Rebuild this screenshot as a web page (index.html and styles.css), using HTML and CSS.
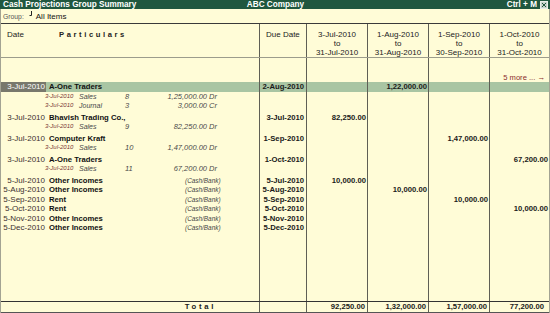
FILE: index.html
```html
<!DOCTYPE html>
<html>
<head>
<meta charset="utf-8">
<title>Cash Projections Group Summary</title>
<link rel="stylesheet" href="styles.css">
</head>
<body>
<div class="app">
  <div class="titlebar">
    <span class="title-left">Cash Projections Group Summary</span>
    <span class="title-center">ABC Company</span>
    <span class="title-right">Ctrl + M
      <svg class="close-icon" width="8" height="8" viewBox="0 0 8 8"><rect x="0.5" y="0.5" width="7" height="7" fill="#c9d3cc" stroke="#e8eee9"/><path d="M2 2 L6 6 M6 2 L2 6" stroke="#20573f" stroke-width="1"/></svg>
    </span>
  </div>
  <div class="main">
    <div class="groupbar">
      <span class="group-label">Group:</span>
      <svg class="group-marker" width="4" height="6" viewBox="0 0 4 6"><path d="M2.5 0 V4.5 M0.5 4.5 H2.5" stroke="#222" stroke-width="1" fill="none"/></svg>
      <span class="group-value">All Items</span>
    </div>
    <div class="table">
      <div class="row head">
        <div class="cell head-first"><span class="head-date">Date</span><span class="head-part">Particulars</span></div>
        <div class="cell head-due">Due Date</div>
        <div class="cell">3-Jul-2010<br>to<br>31-Jul-2010</div>
        <div class="cell">1-Aug-2010<br>to<br>31-Aug-2010</div>
        <div class="cell">1-Sep-2010<br>to<br>30-Sep-2010</div>
        <div class="cell">1-Oct-2010<br>to<br>31-Oct-2010</div>
      </div>
      <div class="body">
        <div class="row more">
          <div class="cell"></div><div class="cell"></div><div class="cell"></div><div class="cell"></div><div class="cell"></div>
          <div class="cell more-link">5 more ... &#8594;</div>
        </div>

        <div class="row r r--hl">
          <div class="cell party"><span class="p-date">3-Jul-2010</span><span class="p-name">A-One Traders</span></div>
          <div class="cell due">2-Aug-2010</div>
          <div class="cell num"></div><div class="cell num">1,22,000.00</div><div class="cell num"></div><div class="cell num"></div>
        </div>
        <div class="row r">
          <div class="cell sub"><span class="s-date">3-Jul-2010</span><span class="s-type">Sales</span><span class="s-no">8</span><span class="s-amt">1,25,000.00 Dr</span></div>
          <div class="cell"></div><div class="cell"></div><div class="cell"></div><div class="cell"></div><div class="cell"></div>
        </div>
        <div class="row r r--end">
          <div class="cell sub"><span class="s-date">3-Jul-2010</span><span class="s-type">Journal</span><span class="s-no">3</span><span class="s-amt">3,000.00 Cr</span></div>
          <div class="cell"></div><div class="cell"></div><div class="cell"></div><div class="cell"></div><div class="cell"></div>
        </div>

        <div class="row r">
          <div class="cell party"><span class="p-date">3-Jul-2010</span><span class="p-name">Bhavish Trading Co.,</span></div>
          <div class="cell due">3-Jul-2010</div>
          <div class="cell num">82,250.00</div><div class="cell num"></div><div class="cell num"></div><div class="cell num"></div>
        </div>
        <div class="row r r--end">
          <div class="cell sub"><span class="s-date">3-Jul-2010</span><span class="s-type">Sales</span><span class="s-no">9</span><span class="s-amt">82,250.00 Dr</span></div>
          <div class="cell"></div><div class="cell"></div><div class="cell"></div><div class="cell"></div><div class="cell"></div>
        </div>

        <div class="row r">
          <div class="cell party"><span class="p-date">3-Jul-2010</span><span class="p-name">Computer Kraft</span></div>
          <div class="cell due">1-Sep-2010</div>
          <div class="cell num"></div><div class="cell num"></div><div class="cell num">1,47,000.00</div><div class="cell num"></div>
        </div>
        <div class="row r r--end">
          <div class="cell sub"><span class="s-date">3-Jul-2010</span><span class="s-type">Sales</span><span class="s-no">10</span><span class="s-amt">1,47,000.00 Dr</span></div>
          <div class="cell"></div><div class="cell"></div><div class="cell"></div><div class="cell"></div><div class="cell"></div>
        </div>

        <div class="row r">
          <div class="cell party"><span class="p-date">3-Jul-2010</span><span class="p-name">A-One Traders</span></div>
          <div class="cell due">1-Oct-2010</div>
          <div class="cell num"></div><div class="cell num"></div><div class="cell num"></div><div class="cell num">67,200.00</div>
        </div>
        <div class="row r r--end">
          <div class="cell sub"><span class="s-date">3-Jul-2010</span><span class="s-type">Sales</span><span class="s-no">11</span><span class="s-amt">67,200.00 Dr</span></div>
          <div class="cell"></div><div class="cell"></div><div class="cell"></div><div class="cell"></div><div class="cell"></div>
        </div>

        <div class="row r">
          <div class="cell party"><span class="p-date">5-Jul-2010</span><span class="p-name p-name--fixed">Other Incomes</span><span class="p-cash">(Cash/Bank)</span></div>
          <div class="cell due">5-Jul-2010</div>
          <div class="cell num">10,000.00</div><div class="cell num"></div><div class="cell num"></div><div class="cell num"></div>
        </div>
        <div class="row r">
          <div class="cell party"><span class="p-date">5-Aug-2010</span><span class="p-name p-name--fixed">Other Incomes</span><span class="p-cash">(Cash/Bank)</span></div>
          <div class="cell due">5-Aug-2010</div>
          <div class="cell num"></div><div class="cell num">10,000.00</div><div class="cell num"></div><div class="cell num"></div>
        </div>
        <div class="row r">
          <div class="cell party"><span class="p-date">5-Sep-2010</span><span class="p-name p-name--fixed">Rent</span><span class="p-cash">(Cash/Bank)</span></div>
          <div class="cell due">5-Sep-2010</div>
          <div class="cell num"></div><div class="cell num"></div><div class="cell num">10,000.00</div><div class="cell num"></div>
        </div>
        <div class="row r">
          <div class="cell party"><span class="p-date">5-Oct-2010</span><span class="p-name p-name--fixed">Rent</span><span class="p-cash">(Cash/Bank)</span></div>
          <div class="cell due">5-Oct-2010</div>
          <div class="cell num"></div><div class="cell num"></div><div class="cell num"></div><div class="cell num">10,000.00</div>
        </div>
        <div class="row r">
          <div class="cell party"><span class="p-date">5-Nov-2010</span><span class="p-name p-name--fixed">Other Incomes</span><span class="p-cash">(Cash/Bank)</span></div>
          <div class="cell due">5-Nov-2010</div>
          <div class="cell num"></div><div class="cell num"></div><div class="cell num"></div><div class="cell num"></div>
        </div>
        <div class="row r">
          <div class="cell party"><span class="p-date">5-Dec-2010</span><span class="p-name p-name--fixed">Other Incomes</span><span class="p-cash">(Cash/Bank)</span></div>
          <div class="cell due">5-Dec-2010</div>
          <div class="cell num"></div><div class="cell num"></div><div class="cell num"></div><div class="cell num"></div>
        </div>

        <div class="row filler">
          <div class="cell"></div><div class="cell"></div><div class="cell"></div><div class="cell"></div><div class="cell"></div><div class="cell"></div>
        </div>
      </div>
      <div class="row total">
        <div class="cell total-label">Total</div>
        <div class="cell"></div>
        <div class="cell t-num">92,250.00</div>
        <div class="cell t-num">1,32,000.00</div>
        <div class="cell t-num">1,57,000.00</div>
        <div class="cell t-num t-num--last">77,200.00</div>
      </div>
    </div>
  </div>
</div>
</body>
</html>
```

FILE: styles.css
```css
* { box-sizing: border-box; }

body {
  margin: 0;
  background: #fffcd7;
  font-family: "Liberation Sans", Arial, sans-serif;
  font-size: 8px;
  color: #1a1a1a;
}

.app {
  width: 550px;
  height: 313px;
  display: flex;
  flex-direction: column;
  overflow: hidden;
  background: #fffcd7;
}

/* title bar */
.titlebar {
  height: 9px;
  flex: none;
  background: #20573f;
  color: #ffffff;
  font-weight: bold;
  font-size: 8.2px;
  line-height: 9px;
  display: grid;
  grid-template-columns: 1fr auto 1fr;
  padding: 0 2px 0 3px;
  white-space: nowrap;
}
.title-center { text-align: center; }
.title-right {
  justify-self: end;
  display: flex;
  align-items: center;
  gap: 3px;
}
.close-icon { display: block; }

/* main framed area */
.main {
  flex: 1;
  min-height: 0;
  display: flex;
  flex-direction: column;
  border-left: 1px solid #a3a393;
  border-right: 1px solid #a3a393;
}

.groupbar {
  height: 15px;
  flex: none;
  border-bottom: 1px solid #3a3a3a;
  display: flex;
  align-items: center;
  padding-left: 2px;
  white-space: nowrap;
}
.group-label { font-size: 6.8px; color: #555; }
.group-marker { margin: -5px 3px 0 5px; }
.group-value { font-size: 8px; color: #111; }

/* table */
.table {
  flex: 1;
  min-height: 0;
  display: flex;
  flex-direction: column;
}
.row {
  display: grid;
  grid-template-columns: 258px 47px 61px 61px 61px 60px;
}
.cell { overflow: hidden; white-space: nowrap; }
.cell + .cell { border-left: 1px solid #5f5f55; }

.head {
  height: 34px;
  flex: none;
  border-bottom: 1px solid #9c9c8c;
}
.head .cell {
  padding-top: 6px;
  line-height: 9px;
  text-align: center;
  color: #222;
}
.head .head-first { display: flex; text-align: left; }
.head-date { width: 58px; padding-left: 6px; }
.head-part { font-weight: bold; letter-spacing: 2.6px; font-size: 7.6px; }
.head .head-due { text-align: left; padding-left: 6px; }

.body {
  flex: 1;
  min-height: 0;
  display: flex;
  flex-direction: column;
}

.more { height: 24px; flex: none; }
.more-link {
  text-align: right;
  padding-top: 15px;
  padding-right: 4px;
  line-height: 9px;
  color: #8a2c2c;
  font-size: 7.6px;
}

.r {
  height: 9.5px;
  flex: none;
  line-height: 9.5px;
}
.r--end { height: 11.5px; }
.r--hl { background: #a9c5a3; }

.party { display: flex; }
.p-date {
  width: 45px;
  text-align: right;
  padding-right: 1px;
  color: #3d3030;
}
.r--hl .p-date { background: #78786c; color: #ffffff; }
.p-name {
  margin-left: 3px;
  font-weight: bold;
  font-size: 7.7px;
  color: #111;
}
.p-name--fixed { width: 136px; }
.p-cash { font-size: 6.4px; color: #444; font-style: italic; }

.sub {
  display: flex;
  padding-left: 44px;
  font-style: italic;
  color: #4a4a4a;
  font-size: 7.5px;
}
.s-date { width: 34px; font-size: 6px; color: #7a3535; }
.s-type { width: 46px; font-size: 7px; }
.s-no { width: 30px; }
.s-amt { width: 62px; text-align: right; }

.due {
  text-align: right;
  padding-right: 2px;
  font-weight: bold;
  font-size: 7.7px;
}
.num {
  text-align: right;
  padding-right: 1px;
  font-weight: bold;
  font-size: 7.7px;
}

.filler { flex: 1; min-height: 0; }

.total {
  height: 12px;
  flex: none;
  border-top: 1px solid #333;
  border-bottom: 1px solid #555;
  line-height: 10px;
  font-weight: bold;
  font-size: 7.7px;
}
.total-label {
  text-align: right;
  padding-right: 43px;
  letter-spacing: 2.7px;
}
.t-num { text-align: right; padding-right: 2px; }
.t-num--last { padding-right: 5px; }
```
